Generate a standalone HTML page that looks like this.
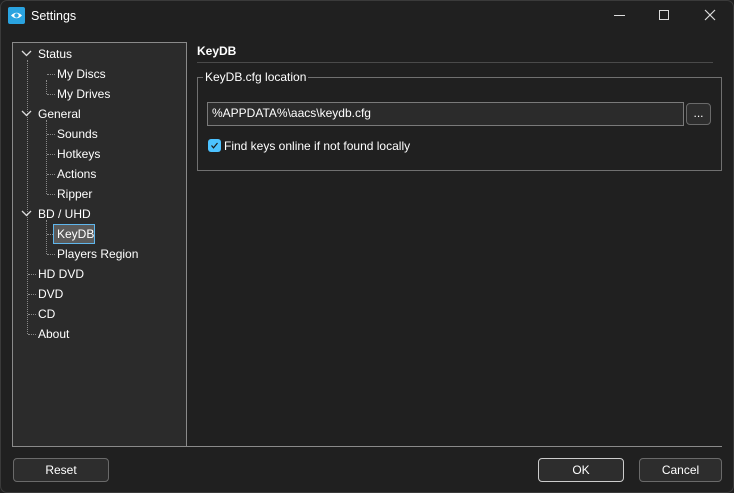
<!DOCTYPE html>
<html><head><style>
*{margin:0;padding:0;box-sizing:border-box}
body{width:734px;height:493px;background:#202020;font-family:"Liberation Sans",sans-serif;font-size:12px;color:#fff;position:relative;overflow:hidden}
.a{position:absolute}
.tree{left:12px;top:42px;width:175px;height:405px;background:#2b2b2b;border:1px solid #8a8a8a;border-bottom:none}
.t{position:absolute;font-size:12px;line-height:14px;white-space:nowrap}
.dv{position:absolute;border-left:1px dotted #888;width:0}
.dh{position:absolute;border-top:1px dotted #888;height:0}
.btn{position:absolute;background:#2d2d2d;border:1px solid #6a6a6a;border-radius:4px;text-align:center;line-height:23px;font-size:12px}
</style></head><body>
<div class="a" style="left:0;top:0;width:734px;height:493px;border:1px solid #3a3a3a;border-radius:7px"></div>
<div class="a" style="left:8px;top:7px;width:17px;height:17px;background:#2aa3e0;border-radius:2px"></div>
<svg class="a" style="left:8px;top:7px" width="17" height="17"><path d="M3 8.5Q8.5 3 14 8.5Q8.5 14 3 8.5Z" fill="#fff"/><circle cx="8.5" cy="8.5" r="2.2" fill="#2aa3e0"/></svg>
<div class="t" style="left:31px;top:9px;font-size:12.5px">Settings</div>
<div class="a" style="left:614px;top:15px;width:11px;border-top:1px solid #ddd"></div>
<div class="a" style="left:659px;top:10px;width:10px;height:10px;border:1px solid #ddd"></div>
<svg class="a" style="left:704px;top:9px" width="12" height="12"><path d="M1 1L11 11M11 1L1 11" stroke="#ddd" stroke-width="1.2"/></svg>

<div class="a tree"></div>
<div class="a" style="left:12px;top:446px;width:710px;border-top:1px solid #8a8a8a"></div>

<div class="dv" style="left:27px;top:60px;height:274px"></div>
<div class="dv" style="left:46px;top:80px;height:14px"></div>
<div class="dv" style="left:46px;top:120px;height:74px"></div>
<div class="dv" style="left:46px;top:220px;height:34px"></div>
<div class="dh" style="left:47px;top:74px;width:8px"></div>
<div class="dh" style="left:47px;top:94px;width:8px"></div>
<div class="dh" style="left:47px;top:134px;width:8px"></div>
<div class="dh" style="left:47px;top:154px;width:8px"></div>
<div class="dh" style="left:47px;top:174px;width:8px"></div>
<div class="dh" style="left:47px;top:194px;width:8px"></div>
<div class="dh" style="left:47px;top:234px;width:6px"></div>
<div class="dh" style="left:47px;top:254px;width:8px"></div>
<div class="dh" style="left:28px;top:274px;width:8px"></div>
<div class="dh" style="left:28px;top:294px;width:8px"></div>
<div class="dh" style="left:28px;top:314px;width:8px"></div>
<div class="dh" style="left:28px;top:334px;width:8px"></div>
<svg class="a" style="left:21px;top:50px" width="12" height="8"><path d="M1 1L5.5 5.5L10 1" stroke="#ddd" stroke-width="1.3" fill="none"/></svg>
<svg class="a" style="left:21px;top:110px" width="12" height="8"><path d="M1 1L5.5 5.5L10 1" stroke="#ddd" stroke-width="1.3" fill="none"/></svg>
<svg class="a" style="left:21px;top:210px" width="12" height="8"><path d="M1 1L5.5 5.5L10 1" stroke="#ddd" stroke-width="1.3" fill="none"/></svg>

<div class="t" style="left:38px;top:47px">Status</div>
<div class="t" style="left:57px;top:67px">My Discs</div>
<div class="t" style="left:57px;top:87px">My Drives</div>
<div class="t" style="left:38px;top:107px">General</div>
<div class="t" style="left:57px;top:127px">Sounds</div>
<div class="t" style="left:57px;top:147px">Hotkeys</div>
<div class="t" style="left:57px;top:167px">Actions</div>
<div class="t" style="left:57px;top:187px">Ripper</div>
<div class="t" style="left:38px;top:207px">BD / UHD</div>
<div class="a" style="left:53px;top:224px;width:42px;height:20px;background:#5a5a5a;border:1px solid #5fb6ec"></div>
<div class="t" style="left:57px;top:227px">KeyDB</div>
<div class="t" style="left:57px;top:247px">Players Region</div>
<div class="t" style="left:38px;top:267px">HD DVD</div>
<div class="t" style="left:38px;top:287px">DVD</div>
<div class="t" style="left:38px;top:307px">CD</div>
<div class="t" style="left:38px;top:327px">About</div>

<div class="t" style="left:197px;top:44px;font-weight:bold">KeyDB</div>
<div class="a" style="left:197px;top:62px;width:516px;border-top:1px solid #4a4a4a"></div>
<div class="a" style="left:197px;top:77px;width:525px;height:94px;border:1px solid #707070"></div>
<div class="t" style="left:203px;top:70px;background:#202020;padding:0 2px">KeyDB.cfg location</div>
<div class="a" style="left:207px;top:102px;width:477px;height:24px;background:#2b2b2b;border:1px solid #7a7a7a"></div>
<div class="t" style="left:212px;top:106px">%APPDATA%\aacs\keydb.cfg</div>
<div class="btn" style="left:686px;top:103px;width:25px;height:22px;line-height:18px">...</div>
<div class="a" style="left:208px;top:139px;width:13px;height:13px;background:#4cc2ff;border-radius:3px"></div>
<svg class="a" style="left:208px;top:139px" width="13" height="13"><path d="M3.5 6.5L5.5 8.8L9.5 4" stroke="#1b1b1b" stroke-width="1.2" fill="none"/></svg>
<div class="t" style="left:224px;top:139px">Find keys online if not found locally</div>

<div class="btn" style="left:13px;top:458px;width:96px;height:24px">Reset</div>
<div class="btn" style="left:538px;top:458px;width:86px;height:24px;border-color:#ccc">OK</div>
<div class="btn" style="left:639px;top:458px;width:83px;height:24px">Cancel</div>
</body></html>
